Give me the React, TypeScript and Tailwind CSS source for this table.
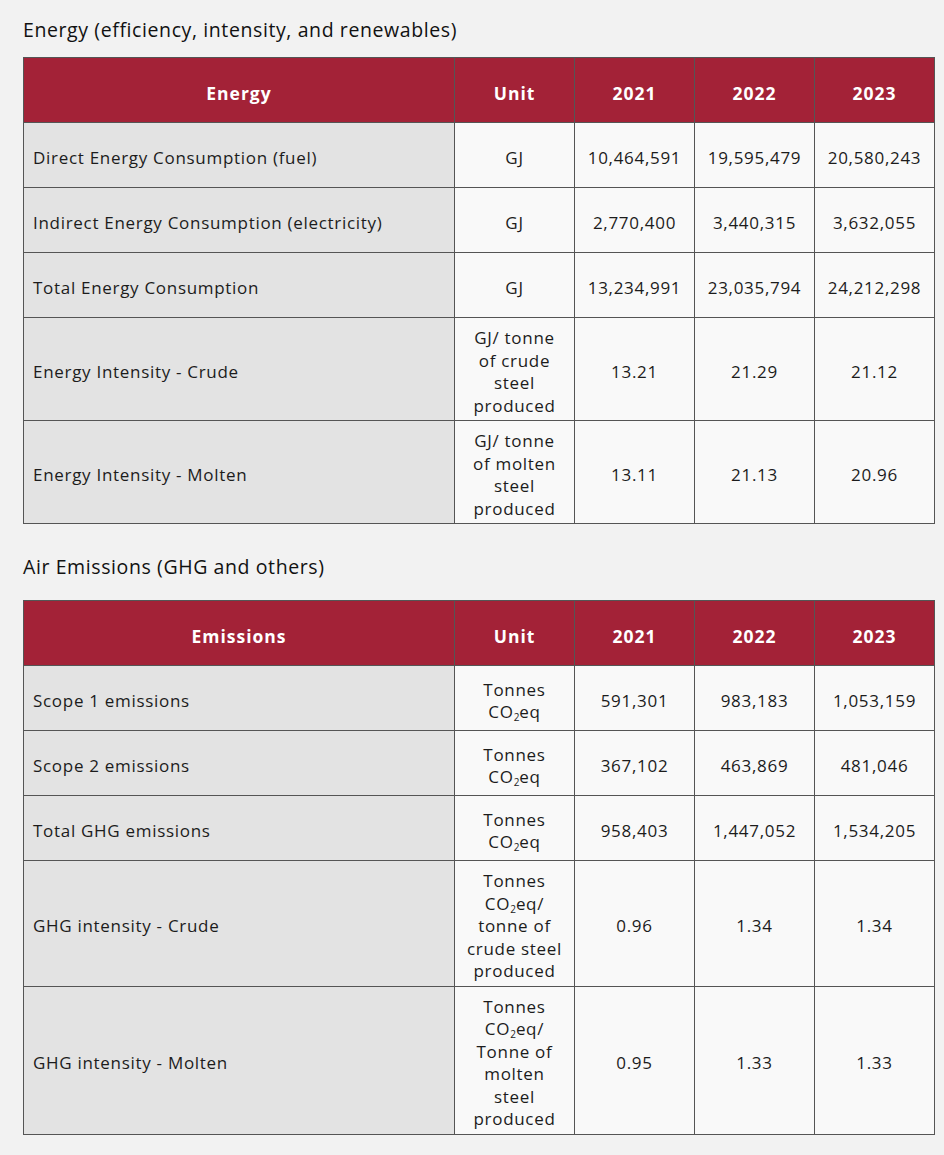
import type { ReactNode } from "react";

// 두 개의 지표 표 — 에너지 / 대기 배출
type Row = { label: string; unit: ReactNode; values: [string, string, string] };

const CO2 = (
  <>
    CO<sub className="relative top-[3px] align-baseline text-[10px] tracking-normal">2</sub>eq
  </>
);

const ENERGY: Row[] = [
  { label: "Direct Energy Consumption (fuel)", unit: "GJ", values: ["10,464,591", "19,595,479", "20,580,243"] },
  { label: "Indirect Energy Consumption (electricity)", unit: "GJ", values: ["2,770,400", "3,440,315", "3,632,055"] },
  { label: "Total Energy Consumption", unit: "GJ", values: ["13,234,991", "23,035,794", "24,212,298"] },
  {
    label: "Energy Intensity - Crude",
    unit: (
      <>
        GJ/ tonne<br />of crude<br />steel<br />produced
      </>
    ),
    values: ["13.21", "21.29", "21.12"],
  },
  {
    label: "Energy Intensity - Molten",
    unit: (
      <>
        GJ/ tonne<br />of molten<br />steel<br />produced
      </>
    ),
    values: ["13.11", "21.13", "20.96"],
  },
];

const EMISSIONS: Row[] = [
  { label: "Scope 1 emissions", unit: <>Tonnes<br />{CO2}</>, values: ["591,301", "983,183", "1,053,159"] },
  { label: "Scope 2 emissions", unit: <>Tonnes<br />{CO2}</>, values: ["367,102", "463,869", "481,046"] },
  { label: "Total GHG emissions", unit: <>Tonnes<br />{CO2}</>, values: ["958,403", "1,447,052", "1,534,205"] },
  {
    label: "GHG intensity - Crude",
    unit: (
      <>
        Tonnes<br />{CO2}/<br />tonne of<br />crude steel<br />produced
      </>
    ),
    values: ["0.96", "1.34", "1.34"],
  },
  {
    label: "GHG intensity - Molten",
    unit: (
      <>
        Tonnes<br />{CO2}/<br />Tonne of<br />molten<br />steel<br />produced
      </>
    ),
    values: ["0.95", "1.33", "1.33"],
  },
];

function DataTable({ first, rows }: { first: string; rows: Row[] }) {
  const th = "border border-[#555] h-[65px] pt-[7px] text-center text-[17.5px] font-bold tracking-[1px] text-white";
  const td = "border border-[#555] pt-[9px] pb-[3px] text-center";
  return (
    <table className="w-[911px] table-fixed border-collapse text-[17px] leading-[22.5px] tracking-[0.7px] text-[#1c1c1c]">
      <colgroup>
        <col className="w-[431px]" />
        <col className="w-[120px]" />
        <col className="w-[120px]" />
        <col className="w-[120px]" />
        <col className="w-[120px]" />
      </colgroup>
      <thead>
        <tr className="bg-[#a32237]">
          <th className={th}>{first}</th>
          <th className={th}>Unit</th>
          <th className={th}>2021</th>
          <th className={th}>2022</th>
          <th className={th}>2023</th>
        </tr>
      </thead>
      <tbody>
        {rows.map((r) => (
          <tr key={r.label} className="h-[65px]">
            <td className="border border-[#555] bg-[#e3e3e3] pt-[9px] pb-[3px] pl-[9px] text-left">{r.label}</td>
            <td className={`${td} bg-[#f9f9f9]`}>{r.unit}</td>
            {r.values.map((v, i) => (
              <td key={i} className={`${td} bg-[#f9f9f9]`}>
                {v}
              </td>
            ))}
          </tr>
        ))}
      </tbody>
    </table>
  );
}

export default function App() {
  return (
    <div
      className="min-h-[1155px] w-[944px] bg-[#f2f2f2] pl-[23px] pt-[17px]"
      style={{ fontFamily: "'Open Sans', Lato, sans-serif" }}
    >
      <h2 className="mb-[14px] text-[19.5px] leading-[26px] tracking-[0.6px] text-[#111]">
        Energy (efficiency, intensity, and renewables)
      </h2>
      <DataTable first="Energy" rows={ENERGY} />
      <h2 className="mb-[20px] mt-[30px] text-[19.5px] leading-[26px] tracking-[0.6px] text-[#111]">
        Air Emissions (GHG and others)
      </h2>
      <DataTable first="Emissions" rows={EMISSIONS} />
    </div>
  );
}
